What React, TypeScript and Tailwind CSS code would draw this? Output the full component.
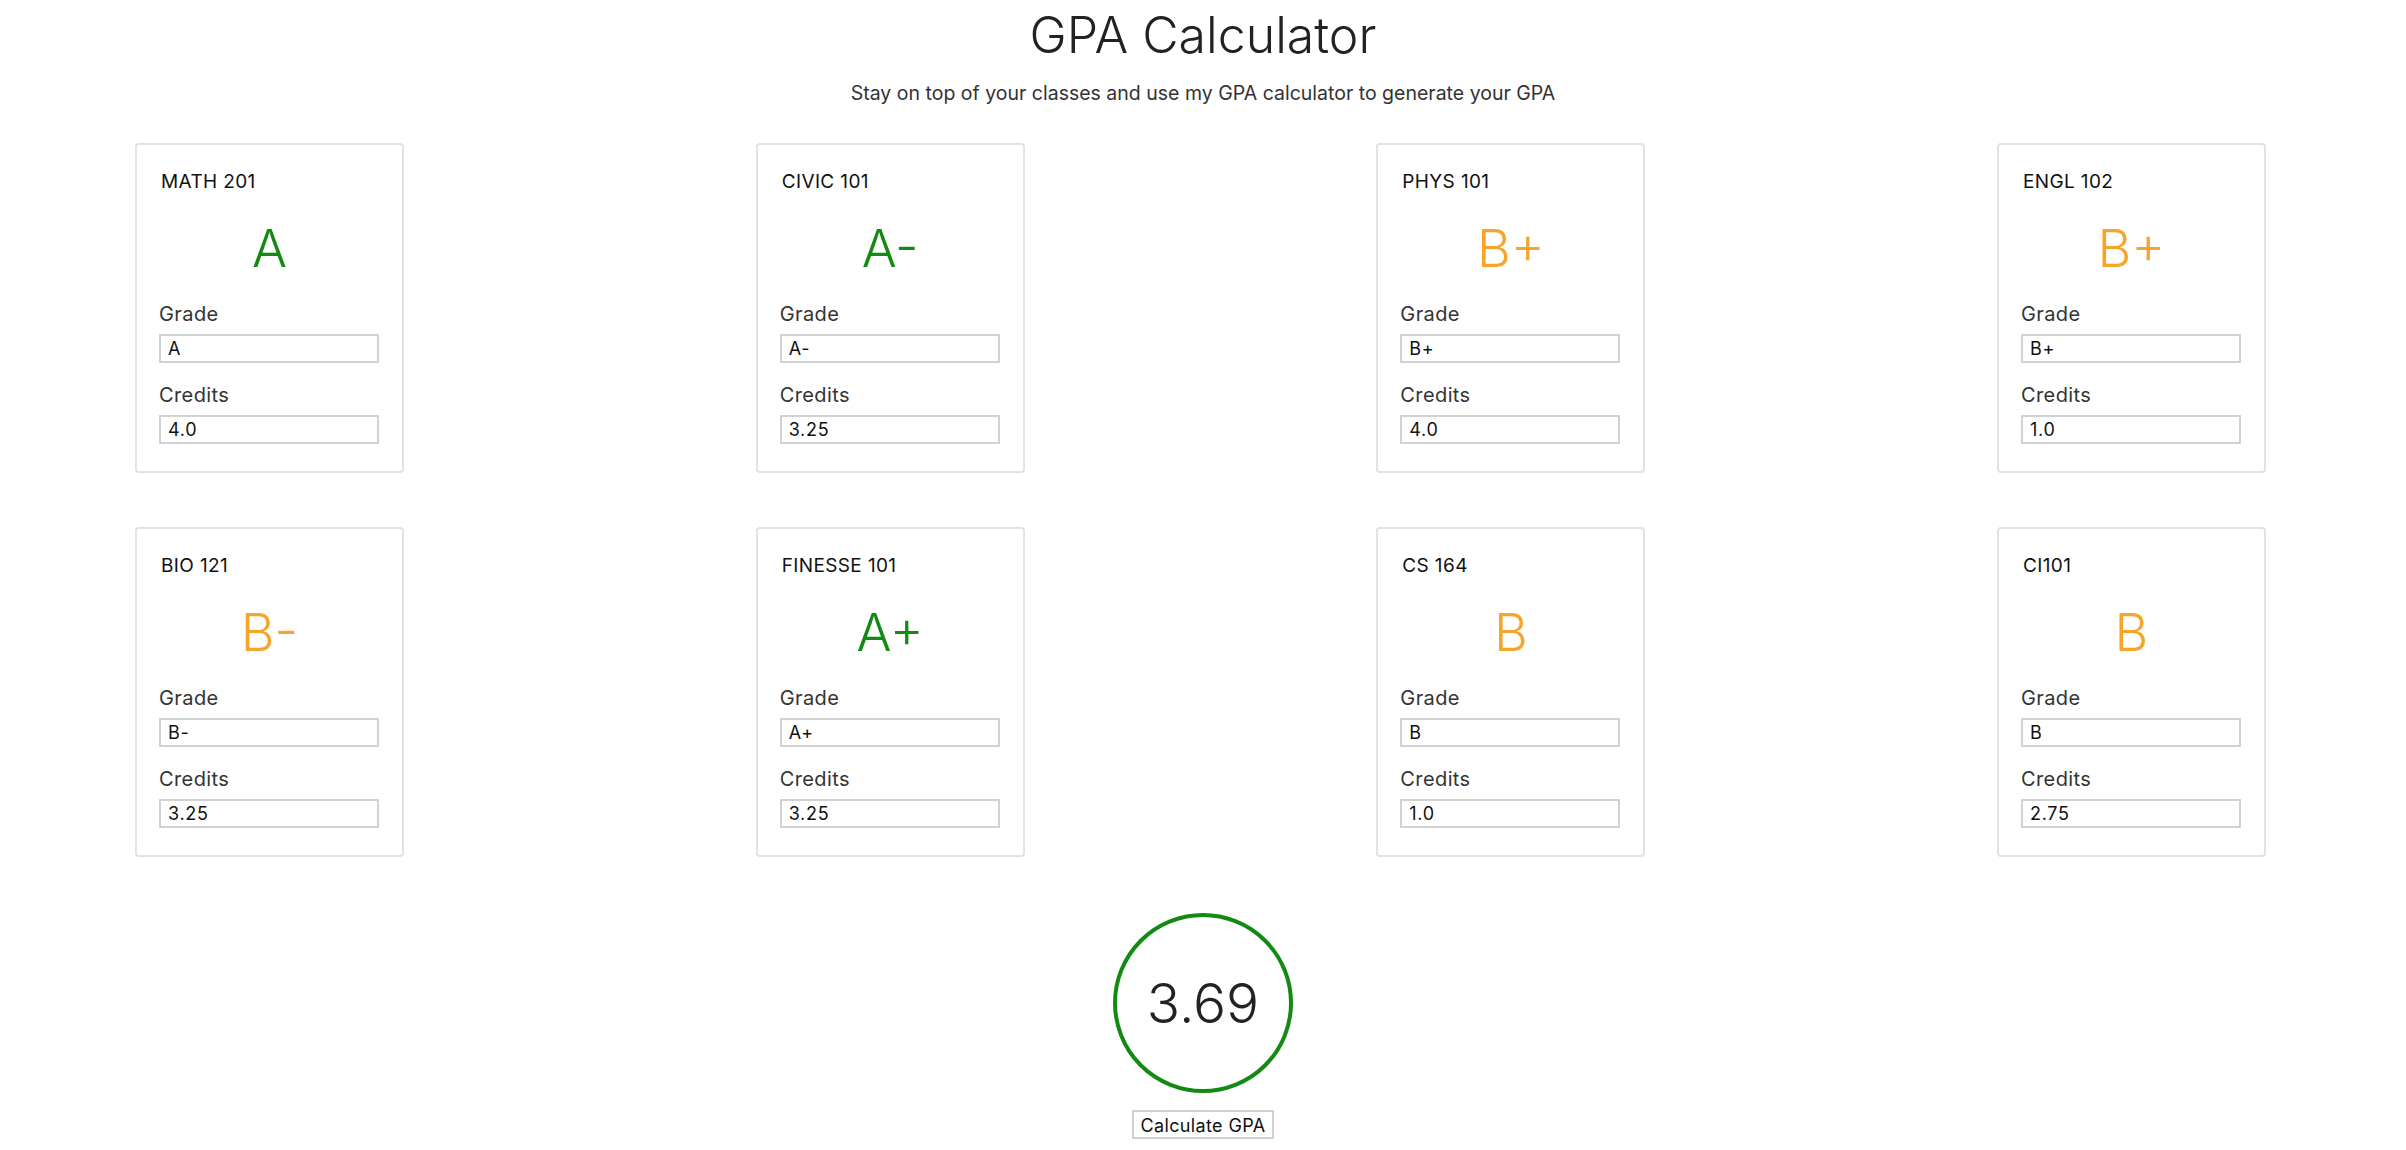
import { useState } from 'react'

type Course = { name: string; grade: string; credits: string }

const initial: Course[] = [
  { name: 'MATH 201', grade: 'A', credits: '4.0' },
  { name: 'CIVIC 101', grade: 'A-', credits: '3.25' },
  { name: 'PHYS 101', grade: 'B+', credits: '4.0' },
  { name: 'ENGL 102', grade: 'B+', credits: '1.0' },
  { name: 'BIO 121', grade: 'B-', credits: '3.25' },
  { name: 'FINESSE 101', grade: 'A+', credits: '3.25' },
  { name: 'CS 164', grade: 'B', credits: '1.0' },
  { name: 'CI101', grade: 'B', credits: '2.75' },
]

const font = { fontFamily: 'Inter, "Noto Sans", sans-serif' }

function CourseCard({ course }: { course: Course }) {
  const isA = course.grade.startsWith('A')
  return (
    <div className="flex h-[330px] w-[269px] flex-col rounded-[4px] border-2 border-[#e2e2e2] bg-white px-[22px] pt-[25px]">
      <div className="pl-[2px] text-[19px] leading-[24px] tracking-[0.02em] text-[#111]">{course.name}</div>
      <div
        className={`mt-[25px] text-center text-[52px] font-light leading-[60px] ${isA ? 'text-[#138a13]' : 'text-[#f6a52a]'}`}
      >
        {course.grade}
      </div>
      <label className="mt-[23px] text-[20px] leading-[24px] tracking-[0.02em] text-[#333]">Grade</label>
      <input
        readOnly
        value={course.grade}
        className="mt-[8px] h-[29px] w-[220px] border-2 border-[#d2d2d2] px-[7px] text-[18px] tracking-[0.04em] text-[#111] outline-none"
        style={font}
      />
      <label className="mt-[20px] text-[20px] leading-[24px] tracking-[0.02em] text-[#333]">Credits</label>
      <input
        readOnly
        value={course.credits}
        className="mt-[8px] h-[29px] w-[220px] border-2 border-[#d2d2d2] px-[7px] text-[18px] tracking-[0.04em] text-[#111] outline-none"
        style={font}
      />
    </div>
  )
}

export default function App() {
  const [courses] = useState(initial)
  return (
    <div className="min-h-[1150px] bg-white" style={font}>
      <div className="flex flex-col items-center">
        <h1 className="mt-[4px] text-[50px] font-light leading-[62px] text-[#222]">GPA Calculator</h1>
        <p className="mt-[14px] text-[19.5px] leading-[26px] text-[#333]">
          Stay on top of your classes and use my GPA calculator to generate your GPA
        </p>
      </div>

      <div className="ml-[135px] mt-[37px] flex w-[2131px] flex-col gap-[54px]">
        <div className="flex justify-between">
          {courses.slice(0, 4).map((c) => (
            <CourseCard key={c.name} course={c} />
          ))}
        </div>
        <div className="flex justify-between">
          {courses.slice(4).map((c) => (
            <CourseCard key={c.name} course={c} />
          ))}
        </div>
      </div>

      <div className="mt-[56px] flex flex-col items-center">
        <div className="flex h-[180px] w-[180px] items-center justify-center rounded-full border-4 border-[#138a13]">
          <span className="text-[55px] font-light text-[#222]">3.69</span>
        </div>
        <button className="mt-[17px] h-[29px] w-[142px] border-2 border-[#d0d0d0] bg-white text-[18px] tracking-[0.02em] text-[#111]">
          Calculate GPA
        </button>
      </div>
    </div>
  )
}
